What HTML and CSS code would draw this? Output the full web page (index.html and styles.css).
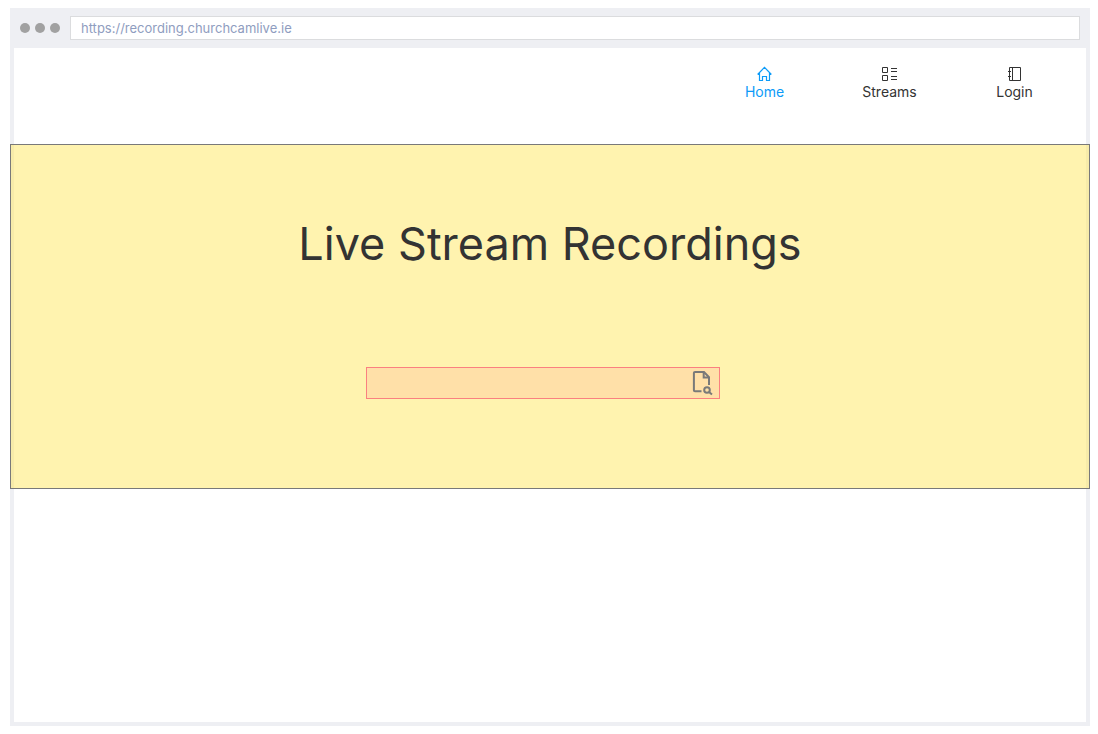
FILE: index.html
```html
<!DOCTYPE html>
<html lang="en">
<head>
<meta charset="utf-8">
<meta name="viewport" content="width=device-width, initial-scale=1">
<title>Live Stream Recordings</title>
<link rel="stylesheet" href="styles.css">
</head>
<body>
<div class="browser">
  <div class="toolbar">
    <div class="dots"><span class="dot"></span><span class="dot"></span><span class="dot"></span></div>
    <input class="address" type="text" aria-label="Address" value="https://recording.churchcamlive.ie">
  </div>
  <div class="page">
    <nav class="nav" aria-label="Main">
      <a class="nav-link active" href="#home">
        <svg class="nav-icon" viewBox="0 0 15 16" aria-hidden="true"><path d="M.6 8.500 7.500 1.300l6.900 7.200M2.500 7v7.500h3v-4h4v4h3V7" stroke-width="1.200"/></svg>
        <span>Home</span>
      </a>
      <a class="nav-link" href="#streams">
        <svg class="nav-icon" viewBox="0 0 15 16" aria-hidden="true"><path d="M.5 1.500h5v5h-5zM.5 9.500h5v5h-5zM9 2.500h6M9 5.500h6M9 10.500h6M9 13.500h6"/></svg>
        <span>Streams</span>
      </a>
      <a class="nav-link" href="#login">
        <svg class="nav-icon" viewBox="0 0 15 16" aria-hidden="true"><path d="M2.500 1.500h11v13h-11zM5.500 1.500v13M1 5.500h3M1 10.500h3"/></svg>
        <span>Login</span>
      </a>
    </nav>
    <main class="hero">
      <h1 class="title">Live Stream Recordings</h1>
      <form class="search">
        <input class="search-input" type="text" aria-label="Search recordings">
        <button class="search-button" type="button" aria-label="Search">
          <svg class="search-icon" viewBox="0 0 22 26" aria-hidden="true"><path d="M10.500 21.300H4Q2.900 21.300 2.900 20.200V3.100Q2.900 2 4 2h9l5 5.200V15"/><path d="M12.700 2v5.500H18"/><circle cx="16" cy="20" r="2.800"/><path d="m18 22 3 2.600"/></svg>
        </button>
      </form>
    </main>
  </div>
</div>
</body>
</html>
```
FILE: styles.css
```css
* {
  box-sizing: border-box;
}

body {
  margin: 0;
  padding: 8px 8px 8px 10px;
  min-height: 100vh;
  display: flex;
  background: #fff;
  color: #333;
  font-family: Inter, "Liberation Sans", sans-serif;
}

.browser {
  flex: 1;
  display: flex;
  flex-direction: column;
  background: #eeeff3;
}

.toolbar {
  display: flex;
  align-items: center;
  gap: 10px;
  height: 40px;
  padding: 0 10px;
}

.dots {
  display: flex;
  gap: 5px;
}

.dot {
  width: 10px;
  height: 10px;
  border-radius: 50%;
  background: #a1a1a1;
}

.address {
  flex: 1;
  min-width: 0;
  height: 24px;
  padding: 0 10px;
  border: 1px solid #dbdcde;
  background: #fff;
  color: #8f9dc0;
  font: 13px/16px Inter, "Liberation Sans", sans-serif;
}

.page {
  flex: 1;
  margin: 0 4px 4px;
  background: #fff;
}

.nav {
  display: flex;
  justify-content: flex-end;
  height: 96px;
  padding: 18px 9px 0 0;
}

.nav-link {
  display: flex;
  flex-direction: column;
  align-items: center;
  width: 125px;
  color: #333;
  font-size: 14px;
  line-height: 20px;
  text-decoration: none;
}

.nav-link.active {
  color: #0c9bf8;
}

.nav-icon {
  width: 15px;
  height: 16px;
  fill: none;
  stroke: currentColor;
  stroke-width: 1;
}

.hero {
  display: flex;
  flex-direction: column;
  align-items: center;
  margin: 0 -4px;
  padding: 69px 20px 89px;
  border: 1px solid #797979;
  background: rgba(255, 231, 95, 0.5);
}

.title {
  margin: 0 0 93px;
  font-size: 45px;
  font-weight: 400;
  line-height: 60px;
  text-align: center;
}

.search {
  display: flex;
  width: 354px;
  max-width: 100%;
  height: 32px;
  margin-right: 14px;
  border: 1px solid #fa8080;
  background: #ffe0a8;
}

.search-input {
  flex: 1;
  min-width: 0;
  padding: 0 8px;
  border: 0;
  background: transparent;
  color: #333;
  font: 14px/20px Inter, "Liberation Sans", sans-serif;
}

.search-button {
  display: flex;
  align-items: center;
  padding: 0 6px 0 0;
  border: 0;
  background: transparent;
  color: #797979;
}

.search-icon {
  width: 22px;
  height: 26px;
  fill: none;
  stroke: currentColor;
  stroke-width: 2;
}
```
